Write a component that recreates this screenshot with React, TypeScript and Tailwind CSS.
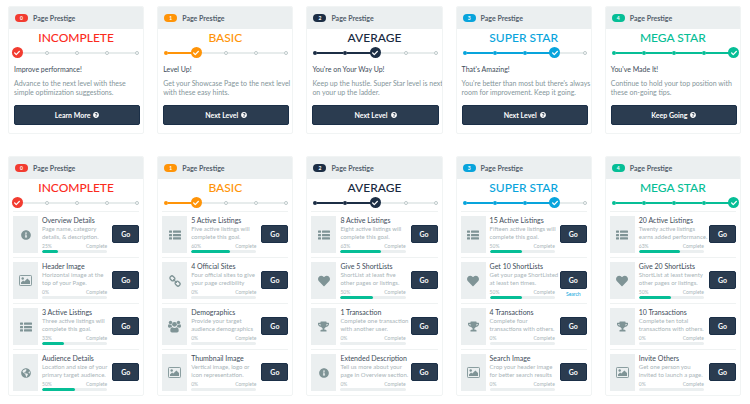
import type { ComponentType } from "react";
import {
  FaCheck,
  FaGlobeAmericas,
  FaHeart,
  FaInfoCircle,
  FaQuestionCircle,
  FaTrophy,
} from "react-icons/fa";

type Goal = {
  icon: ComponentType;
  title: string;
  lines: [string, string];
  percent: number;
  link?: string;
};

type Level = {
  name: string;
  text: string;
  bg: string;
  headline: string;
  lines: [string, string];
  action: string;
  goals: Goal[];
};

const InfoIcon = () => <FaInfoCircle className="size-2.5" />;
const HeartIcon = () => <FaHeart className="size-3" />;
const TrophyIcon = () => <FaTrophy className="size-[11px]" />;
const GlobeIcon = () => <FaGlobeAmericas className="size-2.5" />;

function ChainIcon() {
  return (
    <svg className="size-3" viewBox="0 0 24 24" fill="none" stroke="currentColor" aria-hidden>
      <g transform="rotate(45 12 12)" strokeWidth="2.6">
        <rect x="-0.5" y="8" width="10" height="8" rx="3.6" />
        <rect x="14.5" y="8" width="10" height="8" rx="3.6" />
        <path d="M8 12h8" strokeLinecap="round" />
      </g>
    </svg>
  );
}

function ListIcon() {
  return (
    <svg className="size-3" viewBox="0 0 24 24" fill="currentColor" aria-hidden>
      <rect x="0" y="3" width="6" height="4.5" rx="1" />
      <rect x="8" y="3" width="16" height="4.5" rx="1" />
      <rect x="0" y="9.75" width="6" height="4.5" rx="1" />
      <rect x="8" y="9.75" width="16" height="4.5" rx="1" />
      <rect x="0" y="16.5" width="6" height="4.5" rx="1" />
      <rect x="8" y="16.5" width="16" height="4.5" rx="1" />
    </svg>
  );
}

function PictureIcon() {
  return (
    <svg className="size-[13px]" viewBox="0 0 26 26" fill="currentColor" aria-hidden>
      <rect x="1" y="3" width="24" height="20" rx="1.6" fill="none" stroke="currentColor" strokeWidth="1.8" />
      <circle cx="7.4" cy="9" r="2.4" />
      <path d="M4 20v-3l4.200-4.200 2.400 2.400 6.200-6.400 5.200 5.400V20z" />
    </svg>
  );
}

function GroupIcon() {
  return (
    <svg className="size-[13px]" viewBox="0 0 26 26" fill="currentColor" aria-hidden>
      <circle cx="5" cy="5" r="3.4" />
      <circle cx="21" cy="5" r="3.4" />
      <circle cx="13" cy="8.6" r="4.8" />
      <path d="M0 12.6c0-2.6.8-4.2 2-4.2 1 .8 3.4 1.4 5 .6.1 2 .5 3.4 1.4 4.6-1.7.2-2.9.6-3.8 1.8H2.400C1 15.400 0 14.400 0 12.600z" />
      <path d="M26 12.6c0-2.6-.8-4.2-2-4.2-1 .8-3.4 1.4-5 .6-.1 2-.5 3.4-1.4 4.6 1.700.2 2.900.6 3.800 1.800h2.200c1.400 0 2.400-1 2.400-2.800z" />
      <path d="M4.600 21.200c0-4 1.200-6.800 4-6.800 1 .9 2.500 1.700 4.400 1.700s3.400-.8 4.400-1.700c2.800 0 4 2.800 4 6.800 0 2.400-1.300 3.800-3.400 3.800H8c-2.100 0-3.400-1.400-3.400-3.800z" />
    </svg>
  );
}

const levels: Level[] = [
  {
    name: "INCOMPLETE",
    text: "text-[#fb2b1d]",
    bg: "bg-[#f23c30]",
    headline: "Improve performance!",
    lines: ["Advance to the next level with these", "simple optimization suggestions."],
    action: "Learn More",
    goals: [
      { icon: InfoIcon, title: "Overview Details", lines: ["Page name, category", "details, & description."], percent: 25 },
      { icon: PictureIcon, title: "Header Image", lines: ["Horizontal image at the", "top of your Page."], percent: 0 },
      { icon: ListIcon, title: "3 Active Listings", lines: ["Three active listings will", "complete this goal."], percent: 33 },
      { icon: GlobeIcon, title: "Audience Details", lines: ["Location and size of your", "primary target audience."], percent: 50 },
    ],
  },
  {
    name: "BASIC",
    text: "text-[#ff9408]",
    bg: "bg-[#ff9408]",
    headline: "Level Up!",
    lines: ["Get your Showcase Page to the next level", "with these easy hints."],
    action: "Next Level",
    goals: [
      { icon: ListIcon, title: "5 Active Listings", lines: ["Five active listings will", "complete this goal."], percent: 60 },
      { icon: ChainIcon, title: "4 Official Sites", lines: ["Four official sites to give", "your page credibility"], percent: 0 },
      { icon: GroupIcon, title: "Demographics", lines: ["Provide your target", "audience demographics"], percent: 0 },
      { icon: PictureIcon, title: "Thumbnail Image", lines: ["Vertical image, logo or", "icon representation."], percent: 0 },
    ],
  },
  {
    name: "AVERAGE",
    text: "text-[#182840]",
    bg: "bg-[#1c2e45]",
    headline: "You're on Your Way Up!",
    lines: ["Keep up the hustle. Super Star level is next", "on your up the ladder."],
    action: "Next Level",
    goals: [
      { icon: ListIcon, title: "8 Active Listings", lines: ["Eight active listings will", "complete this goal."], percent: 63 },
      { icon: HeartIcon, title: "Give 5 ShortLists", lines: ["ShortList at least five", "other pages or listings."], percent: 50 },
      { icon: TrophyIcon, title: "1 Transaction", lines: ["Complete one transaction", "with another user."], percent: 0 },
      { icon: InfoIcon, title: "Extended Description", lines: ["Tell us more about your", "page in Overview section."], percent: 0 },
    ],
  },
  {
    name: "SUPER STAR",
    text: "text-[#08a4dc]",
    bg: "bg-[#08a4dc]",
    headline: "That's Amazing!",
    lines: ["You're better than most but there's always", "room for improvement. Keep it going."],
    action: "Next Level",
    goals: [
      { icon: ListIcon, title: "15 Active Listings", lines: ["Fifteen active listings will", "complete this goal."], percent: 50 },
      { icon: HeartIcon, title: "Get 10 ShortLists", lines: ["Get your page ShortListed", "at least ten times."], percent: 50, link: "Search" },
      { icon: TrophyIcon, title: "4 Transactions", lines: ["Complete four", "transactions with others."], percent: 0 },
      { icon: PictureIcon, title: "Search Image", lines: ["Crop your header image", "for better search results"], percent: 0 },
    ],
  },
  {
    name: "MEGA STAR",
    text: "text-[#06be96]",
    bg: "bg-[#06be96]",
    headline: "You've Made It!",
    lines: ["Continue to hold your top position with", "these on-going tips."],
    action: "Keep Going",
    goals: [
      { icon: ListIcon, title: "20 Active Listings", lines: ["Twenty active listings", "earns added performance."], percent: 63 },
      { icon: HeartIcon, title: "Give 20 ShortLists", lines: ["ShortList at least twenty", "other pages or listings."], percent: 50 },
      { icon: TrophyIcon, title: "10 Transactions", lines: ["Complete ten total", "transactions with others."], percent: 0 },
      { icon: PictureIcon, title: "Invite Others", lines: ["Get one person you", "invited to launch a page."], percent: 0 },
    ],
  },
];

function Track({ step, bg }: { step: number; bg: string }) {
  return (
    <div className="flex h-[11px] items-center pl-0.5">
      {levels.map((level, i) => (
        <div key={level.name} className={i > 0 ? "flex flex-1 items-center" : "flex items-center"}>
          {i > 0 && <span className={`h-0.5 flex-1 ${i <= step ? bg : "bg-[#e7ecec]"}`} />}
          <span className="z-10 flex w-1 items-center justify-center">
            {i < step && <span className={`size-1 shrink-0 rounded-full ${bg}`} />}
            {i === step && (
              <span className={`flex size-[11px] shrink-0 items-center justify-center rounded-full text-white ${bg}`}>
                <FaCheck className="size-[6px]" />
              </span>
            )}
            {i > step && <span className="size-1 shrink-0 rounded-full border border-[#bcc8c9] bg-white" />}
          </span>
        </div>
      ))}
    </div>
  );
}

function CardTop({ level, step }: { level: Level; step: number }) {
  return (
    <>
      <header className="flex h-[22px] items-center gap-[5px] bg-[#ebeff0] px-[6px]">
        <span
          className={`flex h-2 w-[13px] items-center justify-center rounded-full text-[5px] leading-[8px] font-bold text-white ${level.bg}`}
        >
          {step}
        </span>
        <span className="text-[7px] font-bold text-[#53606c]">Page Prestige</span>
      </header>
      <div className="px-1">
        <h2 className={`text-center text-[12px] leading-[18px] font-medium ${level.text}`}>{level.name}</h2>
        <Track step={step} bg={level.bg} />
      </div>
    </>
  );
}

function SummaryCard({ level, step }: { level: Level; step: number }) {
  return (
    <section className="overflow-hidden rounded-[2px] border border-[#f1f4f4]">
      <CardTop level={level} step={step} />
      <div className="pt-[6px] pr-[3px] pb-2 pl-[5px] whitespace-nowrap">
        <h3 className="text-[7px] leading-[10px] text-[#3e4c59]">{level.headline}</h3>
        <p className="mt-[5px] text-[7px] leading-[9px] text-[#84959a]">
          {level.lines[0]}
          <br />
          {level.lines[1]}
        </p>
        <button
          type="button"
          className="mt-2 flex h-5 w-full items-center justify-center gap-[3px] rounded-[2px] border border-[#1b2f47] bg-[#2b3c50] text-[7px] font-bold text-white"
        >
          {level.action}
          <FaQuestionCircle className="size-[6px]" />
        </button>
      </div>
    </section>
  );
}

function GoalRow({ goal }: { goal: Goal }) {
  const Icon = goal.icon;
  return (
    <li className="flex border-t border-[#eff2f2] py-1">
      <div className="flex h-[37px] w-[25px] shrink-0 items-center justify-center bg-[#ebeff0] text-[#7f9496]">
        <Icon />
      </div>
      <div className="ml-1 min-w-0 flex-1 whitespace-nowrap">
        <h3 className="text-[7px] leading-[9px] text-[#3e4c59]">{goal.title}</h3>
        <p className="text-[6px] leading-[8px] text-[#a9b5b9]">
          {goal.lines[0]}
          <br />
          {goal.lines[1]}
        </p>
        <div className="mt-px flex justify-between text-[5px] leading-[8px] text-[#a9b5b9]">
          <span>{goal.percent}%</span>
          <span>Complete</span>
        </div>
        <div className="h-[3px] overflow-hidden rounded-full bg-[#ebeff0]">
          <div className="h-full rounded-full bg-[#06be96]" style={{ width: `${goal.percent}%` }} />
        </div>
      </div>
      <div className="ml-[5px] flex w-[27px] shrink-0 flex-col items-center pt-[9px]">
        <button
          type="button"
          className="h-[18px] w-full rounded-[2px] border border-[#1b2f47] bg-[#2b3c50] text-[7px] leading-none font-bold text-white"
        >
          Go
        </button>
        {goal.link && (
          <a href="#search" className="mt-px text-[5px] leading-[8px] text-[#08a4dc]">
            {goal.link}
          </a>
        )}
      </div>
    </li>
  );
}

function GoalsCard({ level, step }: { level: Level; step: number }) {
  return (
    <section className="overflow-hidden rounded-[2px] border border-[#f1f4f4]">
      <CardTop level={level} step={step} />
      <ul className="mt-[3px] px-1">
        {level.goals.map((goal) => (
          <GoalRow key={goal.title} goal={goal} />
        ))}
      </ul>
    </section>
  );
}

export default function App() {
  return (
    <main className="bg-white pt-[6px] pr-[9px] pl-2 font-['Lato',sans-serif]">
      <div className="grid grid-cols-5 gap-[13px]">
        {levels.map((level, i) => (
          <SummaryCard key={level.name} level={level} step={i} />
        ))}
      </div>
      <div className="mt-[22px] grid grid-cols-5 gap-[13px]">
        {levels.map((level, i) => (
          <GoalsCard key={level.name} level={level} step={i} />
        ))}
      </div>
    </main>
  );
}
